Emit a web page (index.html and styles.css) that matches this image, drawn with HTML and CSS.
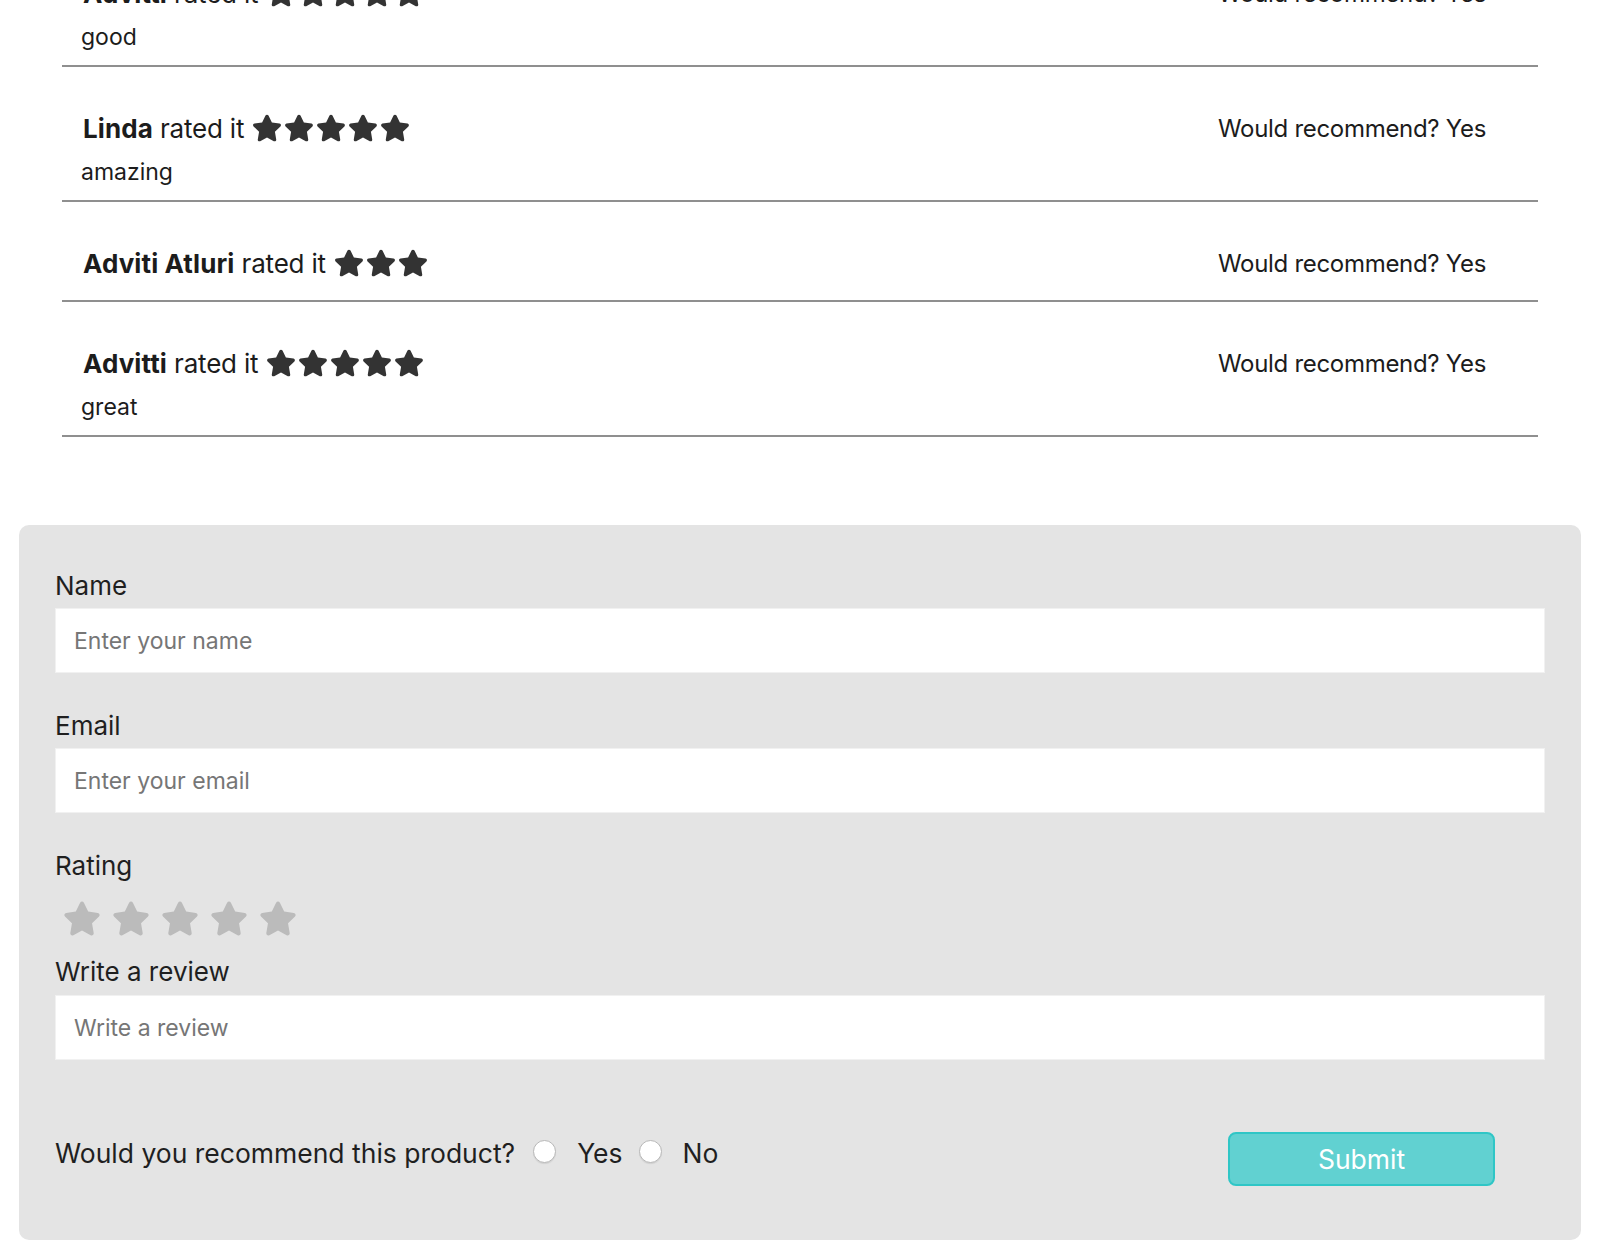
FILE: index.html
```html
<!DOCTYPE html>
<html lang="en">
<head>
<meta charset="utf-8">
<title>Reviews</title>
<link rel="stylesheet" href="styles.css">
</head>
<body>
<svg width="0" height="0" class="defs" aria-hidden="true">
  <defs>
    <symbol id="star" viewBox="0 0 576 512">
      <path d="M259.3 17.8L194 150.2 47.9 171.5c-26.2 3.8-36.7 36.1-17.7 54.6l105.7 103-25 145.5c-4.5 26.3 23.2 46 46.4 33.7L288 439.6l130.7 68.7c23.2 12.2 50.9-7.4 46.4-33.7l-25-145.5 105.7-103c19-18.5 8.5-50.8-17.7-54.6L382 150.2 316.7 17.8c-11.7-23.6-45.6-23.9-57.4 0z"/>
    </symbol>
  </defs>
</svg>

<div class="reviews">
  <div class="review">
    <div class="review-head">
      <div class="who"><b>Advitti</b> rated it <span class="stars"><svg><use href="#star"/></svg><svg><use href="#star"/></svg><svg><use href="#star"/></svg><svg><use href="#star"/></svg><svg><use href="#star"/></svg></span></div>
      <div class="rec">Would recommend? Yes</div>
    </div>
    <div class="comment">good</div>
  </div>
  <div class="review">
    <div class="review-head">
      <div class="who"><b>Linda</b> rated it <span class="stars"><svg><use href="#star"/></svg><svg><use href="#star"/></svg><svg><use href="#star"/></svg><svg><use href="#star"/></svg><svg><use href="#star"/></svg></span></div>
      <div class="rec">Would recommend? Yes</div>
    </div>
    <div class="comment">amazing</div>
  </div>
  <div class="review">
    <div class="review-head">
      <div class="who"><b>Adviti Atluri</b> rated it <span class="stars"><svg><use href="#star"/></svg><svg><use href="#star"/></svg><svg><use href="#star"/></svg></span></div>
      <div class="rec">Would recommend? Yes</div>
    </div>
  </div>
  <div class="review">
    <div class="review-head">
      <div class="who"><b>Advitti</b> rated it <span class="stars"><svg><use href="#star"/></svg><svg><use href="#star"/></svg><svg><use href="#star"/></svg><svg><use href="#star"/></svg><svg><use href="#star"/></svg></span></div>
      <div class="rec">Would recommend? Yes</div>
    </div>
    <div class="comment">great</div>
  </div>
</div>

<form class="panel">
  <label class="label first" for="name">Name</label>
  <input class="field" id="name" type="text" placeholder="Enter your name">

  <label class="label" for="email">Email</label>
  <input class="field" id="email" type="text" placeholder="Enter your email">

  <div class="label">Rating</div>
  <div class="rating">
    <svg><use href="#star"/></svg><svg><use href="#star"/></svg><svg><use href="#star"/></svg><svg><use href="#star"/></svg><svg><use href="#star"/></svg>
  </div>

  <label class="label tight" for="review">Write a review</label>
  <input class="field" id="review" type="text" placeholder="Write a review">

  <div class="bottom">
    <div class="question">
      <span>Would you recommend this product?</span>
      <input class="radio" type="radio" name="rec" id="yes"><label for="yes">Yes</label>
      <input class="radio" type="radio" name="rec" id="no"><label for="no">No</label>
    </div>
    <button class="submit" type="button">Submit</button>
  </div>
</form>
</body>
</html>
```

FILE: styles.css
```css
html, body {
  margin: 0;
  padding: 0;
  background: #ffffff;
}

body {
  font-family: Inter, "Liberation Sans", sans-serif;
  color: #1c1c1c;
  overflow: hidden;
}

.defs {
  position: absolute;
  width: 0;
  height: 0;
}

.reviews {
  margin: -68px 62px 0;
}

.review {
  padding: 38px 0 14px;
  border-bottom: 2px solid #8f8f8f;
}

.review-head {
  display: flex;
  justify-content: space-between;
  align-items: center;
  height: 46px;
  font-size: 26px;
}

.who {
  display: flex;
  align-items: center;
  padding-left: 21px;
  white-space: pre;
  letter-spacing: -0.2px;
}

.who b {
  font-weight: 700;
  letter-spacing: 0.1px;
}

.stars {
  display: inline-flex;
  gap: 2px;
  margin-left: 1px;
  fill: #333333;
}

.stars svg {
  width: 30px;
  height: 28px;
}

.rec {
  padding-right: 52px;
  font-size: 24px;
  letter-spacing: -0.3px;
}

.comment {
  margin-top: 7px;
  line-height: 28px;
  font-size: 23px;
  padding-left: 19px;
}

.panel {
  display: flex;
  flex-direction: column;
  align-items: stretch;
  margin: 88px 19px 0;
  padding: 46px 36px 54px;
  background: #e4e4e4;
  border-radius: 10px;
}

.label {
  font-size: 26px;
  line-height: 30px;
  margin: 38px 0 7px;
  color: #1f1f1f;
}

.label.first {
  margin-top: 0;
}

.label.tight {
  margin-top: 21px;
  margin-bottom: 8px;
}

.field {
  height: 65px;
  box-sizing: border-box;
  border: 1px solid #f1f1f1;
  background: #ffffff;
  padding: 0 18px;
  font-family: Inter, "Liberation Sans", sans-serif;
  font-size: 23px;
  color: #222222;
  outline: none;
}

.field::placeholder {
  color: #767676;
}

.rating {
  display: flex;
  gap: 11px;
  margin-top: 13px;
  padding-left: 8px;
  fill: #bbbbbb;
}

.rating svg {
  width: 38px;
  height: 35px;
}

.bottom {
  display: flex;
  justify-content: space-between;
  align-items: flex-start;
  margin-top: 72px;
}

.question {
  display: flex;
  align-items: center;
  height: 42px;
  font-size: 26.5px;
  color: #1f1f1f;
}

.radio {
  appearance: none;
  -webkit-appearance: none;
  width: 23px;
  height: 23px;
  margin: 0 21px 0 18px;
  border: 1px solid #b8b8b8;
  border-radius: 50%;
  background: #ffffff;
  box-shadow: 0 1px 1px rgba(0, 0, 0, 0.08);
  position: relative;
  top: -2px;
}

.question label + .radio {
  margin-left: 16px;
}

.submit {
  width: 267px;
  height: 54px;
  margin-right: 50px;
  background: #61d1d1;
  border: 2px solid #2fc6c6;
  border-radius: 8px;
  color: #ffffff;
  font-family: Inter, "Liberation Sans", sans-serif;
  font-size: 26.5px;
  padding: 0;
}
```
